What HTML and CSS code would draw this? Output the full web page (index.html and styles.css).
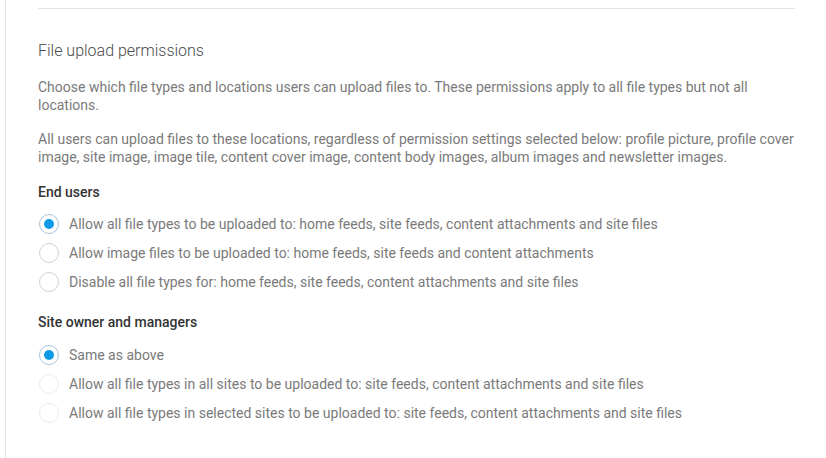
FILE: index.html
```html
<!DOCTYPE html>
<html lang="en">
<head>
    <meta charset="UTF-8">
    <meta name="viewport" content="width=device-width, initial-scale=1.0">
    <title>File upload permissions</title>
    <link rel="stylesheet" href="styles.css">
</head>
<body>
    <div class="panel">
        <div class="section">
            <h2 class="title">File upload permissions</h2>
            <p class="text">Choose which file types and locations users can upload files to. These permissions apply to all file types but not all locations.</p>
            <p class="text">All users can upload files to these locations, regardless of permission settings selected below: profile picture, profile cover image, site image, image tile, content cover image, content body images, album images and newsletter images.</p>

            <h3 class="group">End users</h3>
            <div class="options">
                <label class="option">
                    <input type="radio" name="end" checked>
                    <span class="dot"></span>
                    Allow all file types to be uploaded to: home feeds, site feeds, content attachments and site files
                </label>
                <label class="option">
                    <input type="radio" name="end">
                    <span class="dot"></span>
                    Allow image files to be uploaded to: home feeds, site feeds and content attachments
                </label>
                <label class="option">
                    <input type="radio" name="end">
                    <span class="dot"></span>
                    Disable all file types for: home feeds, site feeds, content attachments and site files
                </label>
            </div>

            <h3 class="group">Site owner and managers</h3>
            <div class="options">
                <label class="option">
                    <input type="radio" name="owner" checked>
                    <span class="dot"></span>
                    Same as above
                </label>
                <label class="option">
                    <input type="radio" name="owner" disabled>
                    <span class="dot"></span>
                    Allow all file types in all sites to be uploaded to: site feeds, content attachments and site files
                </label>
                <label class="option">
                    <input type="radio" name="owner" disabled>
                    <span class="dot"></span>
                    Allow all file types in selected sites to be uploaded to: site feeds, content attachments and site files
                </label>
            </div>
        </div>
    </div>
</body>
</html>
```

FILE: styles.css
```css
body {
    margin: 0;
    background: #fff;
    font-family: Roboto, 'Liberation Sans', sans-serif;
    color: #7a7a7a;
}
.panel {
    margin-left: 5px;
    min-height: 458px;
    border-left: 1px solid #e4e4e4;
    padding: 8px 31px 0 32px;
    box-sizing: border-box;
}
.section {
    border-top: 1px solid #e4e4e4;
    padding-top: 32px;
}
.title {
    margin: 0 0 18px;
    font-size: 16px;
    font-weight: 300;
    line-height: 20px;
    color: #4a4a4a;
}
.text {
    margin: 0 0 17px;
    font-size: 14px;
    line-height: 17.5px;
}
.group {
    margin: 0 0 12px;
    font-size: 14px;
    font-weight: 500;
    line-height: 19px;
    color: #333;
}
.options + .group {
    margin-top: 1px;
    margin-bottom: 13px;
}
.options {
    display: flex;
    flex-direction: column;
    gap: 9px;
    margin-bottom: 21px;
}
.option {
    display: flex;
    align-items: center;
    gap: 10px;
    font-size: 14px;
    line-height: 20px;
    color: #7a7a7a;
    cursor: pointer;
}
.option input {
    display: none;
}
.dot {
    flex: none;
    width: 18px;
    height: 18px;
    margin-left: 1px;
    border: 1px solid #d2d2d2;
    border-radius: 50%;
    position: relative;
}
.option input:checked + .dot {
    border-color: #a9c4da;
}
.option input:checked + .dot::after {
    content: "";
    position: absolute;
    left: 4px;
    top: 4px;
    width: 10px;
    height: 10px;
    border-radius: 50%;
    background: #0f9ae8;
}
.option input:disabled + .dot {
    border-color: #ececec;
}
```
